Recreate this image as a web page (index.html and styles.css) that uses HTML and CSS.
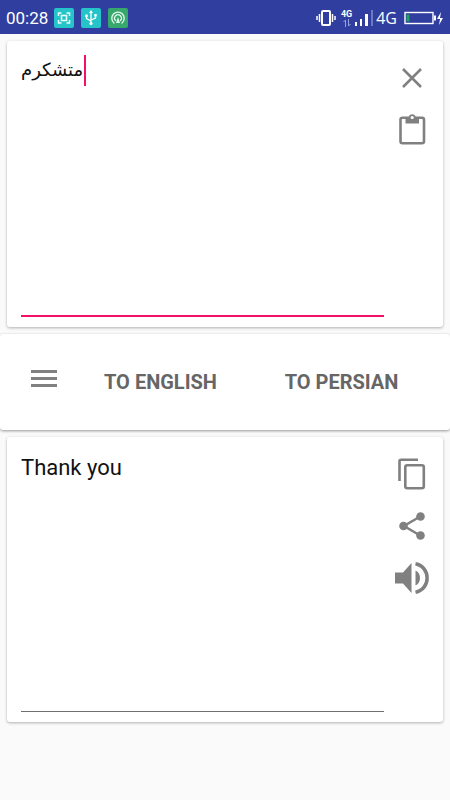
FILE: index.html
```html
<!DOCTYPE html>
<html lang="en">
<head>
    <meta charset="UTF-8">
    <meta name="viewport" content="width=device-width, initial-scale=1.0">
    <title>Persian Translator</title>
    <link rel="stylesheet" href="styles.css">
</head>
<body>

    <header class="status-bar">
        <span class="clock">00:28</span>
        <div class="notifications">
            <svg class="badge" viewBox="0 0 20 20">
                <rect width="20" height="20" rx="2" fill="#24c4c8"/>
                <g fill="none" stroke="#e8ffff" stroke-width="1.5">
                    <path d="M4.500 8V5h3M12.500 5h3v3M15.500 12v3h-3M7.500 15h-3v-3"/>
                    <rect x="7.500" y="7.500" width="5" height="5"/>
                </g>
            </svg>
            <svg class="badge" viewBox="0 0 20 20">
                <rect width="20" height="20" rx="2" fill="#24c4c8"/>
                <g fill="none" stroke="#fff" stroke-width="1.300">
                    <path d="M10 4v11M5.500 8v2.500l4.500 2.500M14.500 7v3L10 12"/>
                </g>
                <path d="M10 2l2 3H8zM4.300 6.500h2.400v2.400H4.300zM13.300 6h2.400v2.400h-2.400z" fill="#fff"/>
                <circle cx="10" cy="15.500" r="1.600" fill="#fff"/>
            </svg>
            <svg class="badge" viewBox="0 0 20 20">
                <rect width="20" height="20" rx="2" fill="#36a86c"/>
                <g fill="none" stroke="#e4f7ec" stroke-width="1.300" stroke-linecap="round">
                    <path d="M6 15a6.200 6.200 0 1 1 8 0"/>
                    <path d="M7.500 12.500a3.400 3.400 0 1 1 5 0"/>
                </g>
                <path d="M10 9l2 6H8z" fill="#e4f7ec"/>
            </svg>
        </div>
        <div class="system-icons">
            <svg class="vibrate" viewBox="0 0 20 18" fill="none" stroke="#fff">
                <rect x="6" y="2" width="8" height="14" rx="1" stroke-width="2"/>
                <path d="M3.500 5v8M16.500 5v8M1 7v4M19 7v4" stroke-width="1.500"/>
            </svg>
            <span class="data">
                <span class="data-label">4G</span>
                <svg class="data-arrows" viewBox="0 0 8 8" fill="none" stroke="#9aa4dc">
                    <path d="M2.500 8V1L.5 3M5.500 0v7l2-2"/>
                </svg>
            </span>
            <svg class="signal" viewBox="0 0 20 18">
                <path d="M1 13h2v4H1zM6 10h2v7H6zM11 5h3v12h-3z" fill="#fff"/>
                <path d="M17 1h2v16h-2z" fill="#6f79c0"/>
            </svg>
            <span class="network">4G</span>
            <svg class="battery" viewBox="0 0 40 16">
                <rect x="1" y="2.500" width="28" height="11" fill="none" stroke="#fff" stroke-width="1.400"/>
                <path d="M2.500 4.500h3v7h-3z" fill="#1fa35c"/>
                <path d="M30 5.500h2v5h-2z" fill="#fff"/>
                <path d="M37 2l-4 7h3l-1 6 4-7h-3z" fill="#fff"/>
            </svg>
        </div>
    </header>

    <main>
        <section class="card">
            <div class="field">
                <textarea class="source" aria-label="Text to translate" spellcheck="false">متشکرم</textarea>
                <span class="caret"></span>
            </div>
            <div class="actions">
                <button type="button" aria-label="Clear">
                    <svg viewBox="0 0 36 36" fill="none" stroke="#808080" stroke-width="2.500">
                        <path d="M9 9l18 18M27 9L9 27"/>
                    </svg>
                </button>
                <button type="button" aria-label="Paste">
                    <svg viewBox="0 0 36 36">
                        <rect x="6.500" y="5.700" width="23.500" height="25.500" rx="2" fill="none" stroke="#808080" stroke-width="2.600"/>
                        <path d="M11.500 5h3.200a3.600 3.600 0 0 1 7 0H25v6.500H11.500z" fill="#808080"/>
                        <circle cx="18.200" cy="5.500" r="1.600" fill="#fff"/>
                    </svg>
                </button>
            </div>
        </section>

        <nav class="toolbar">
            <button type="button" class="menu-btn" aria-label="Menu">
                <svg viewBox="0 0 26 18" fill="#808080">
                    <path d="M0 0h26v3H0zM0 7h26v3H0zM0 14h26v3H0z"/>
                </svg>
            </button>
            <button type="button" class="lang-btn">TO ENGLISH</button>
            <button type="button" class="lang-btn">TO PERSIAN</button>
        </nav>

        <section class="card">
            <div class="field">
                <textarea class="result" aria-label="Translation" spellcheck="false">Thank you</textarea>
            </div>
            <div class="actions">
                <button type="button" aria-label="Copy">
                    <svg viewBox="0 0 36 36" fill="none" stroke="#808080" stroke-width="2.600">
                        <path d="M5.500 25V5.300a1.500 1.500 0 0 1 1.500-1.500h17"/>
                        <rect x="11.300" y="9.300" width="18.500" height="23" rx="2"/>
                    </svg>
                </button>
                <button type="button" aria-label="Share">
                    <svg viewBox="0 0 36 36">
                        <path d="M27 8L10 18l17 10" fill="none" stroke="#808080" stroke-width="2.500"/>
                        <g fill="#808080">
                            <circle cx="26.500" cy="8.500" r="4.300"/>
                            <circle cx="9.500" cy="18" r="4.300"/>
                            <circle cx="26.500" cy="27.500" r="4.300"/>
                        </g>
                    </svg>
                </button>
                <button type="button" aria-label="Listen">
                    <svg viewBox="0 0 36 36" fill="#808080">
                        <path d="M1 12.500h8L17.500 3v30L9 23.500H1z"/>
                        <path d="M21.500 10.500c6 2.500 6 12.500 0 15z"/>
                        <path d="M21.500 3.800c15.500 3 15.500 25.400 0 28.400" fill="none" stroke="#808080" stroke-width="3.500"/>
                    </svg>
                </button>
            </div>
        </section>
    </main>

</body>
</html>
```

FILE: styles.css
```css
* {
    box-sizing: border-box;
}
body {
    margin: 0;
    background: #fafafa;
    font-family: Roboto, "DejaVu Sans", sans-serif;
    color: #111;
}
button {
    padding: 0;
    border: none;
    background: none;
    font-family: inherit;
    cursor: pointer;
}
svg {
    display: block;
}

/* Status bar */
.status-bar {
    display: flex;
    align-items: center;
    height: 34px;
    padding: 2px 6px 0;
    background: #303f9f;
    color: #fff;
}
.clock {
    font-size: 17px;
}
.notifications {
    display: flex;
    gap: 7px;
    margin-left: 6px;
}
.badge {
    width: 20px;
    height: 20px;
}
.system-icons {
    display: flex;
    align-items: center;
    margin-left: auto;
}
.vibrate {
    width: 20px;
    height: 18px;
    margin-right: 5px;
}
.data {
    display: flex;
    flex-direction: column;
    align-items: center;
    margin-right: 2px;
}
.data-label {
    font-size: 9px;
    font-weight: bold;
    line-height: 9px;
}
.data-arrows {
    width: 8px;
    height: 8px;
}
.signal {
    width: 20px;
    height: 18px;
    margin-right: 2px;
}
.network {
    margin-right: 7px;
    font-family: "Open Sans", sans-serif;
    font-size: 16px;
    line-height: 18px;
}
.battery {
    width: 40px;
    height: 16px;
}

/* Text cards */
.card {
    display: flex;
    margin: 7px;
    padding: 14px 13px 10px 14px;
    background: #fff;
    border-radius: 3px;
    box-shadow: 0 1px 3px rgba(0, 0, 0, 0.3);
}
.field {
    position: relative;
    flex: 1;
}
.field textarea {
    display: block;
    width: 100%;
    height: 262px;
    padding: 3px 0;
    border: none;
    border-radius: 0;
    outline: none;
    background: transparent;
    resize: none;
    font-family: inherit;
    font-size: 22px;
    line-height: 28px;
    color: #111;
}
.field .source {
    border-bottom: 2px solid #f50f69;
    font-size: 18px;
    line-height: 24px;
    caret-color: #f50f69;
}
.field .result {
    height: 261px;
    border-bottom: 1px solid #707070;
}
.caret {
    position: absolute;
    top: 0;
    left: 63px;
    width: 2px;
    height: 31px;
    background: #f50f69;
}
.actions {
    display: flex;
    flex-direction: column;
    align-items: center;
    gap: 16px;
    width: 36px;
    margin-left: 10px;
    padding-top: 5px;
}
.actions svg {
    width: 36px;
    height: 36px;
}

/* Language toolbar */
.toolbar {
    display: grid;
    grid-template-columns: 70px 1fr 1fr;
    align-items: center;
    height: 96px;
    padding-right: 18px;
    background: #fff;
    border-radius: 3px;
    box-shadow: 0 1px 3px rgba(0, 0, 0, 0.4);
}
.menu-btn {
    justify-self: end;
    margin-right: 13px;
    padding-bottom: 6px;
}
.menu-btn svg {
    width: 26px;
    height: 18px;
}
.lang-btn {
    height: 48px;
    font-size: 20px;
    font-weight: bold;
    color: #666;
}
```
